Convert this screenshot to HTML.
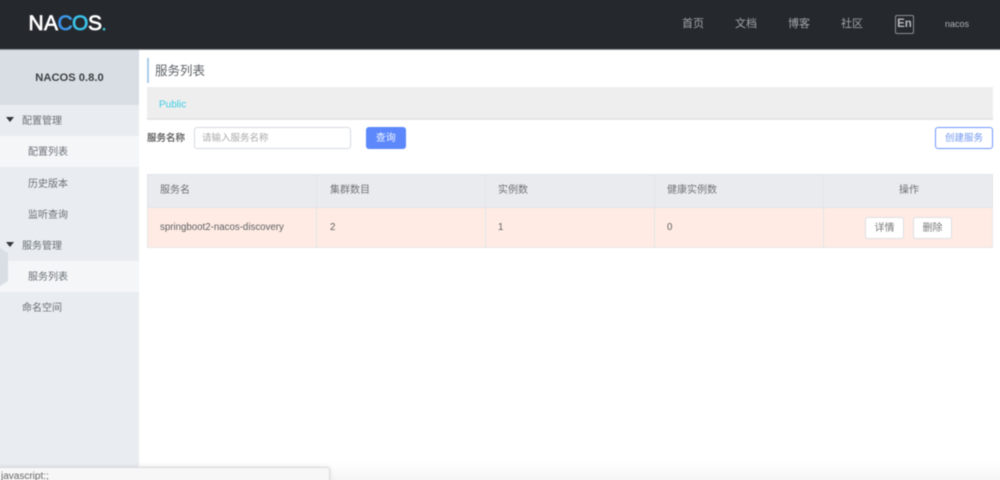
<!DOCTYPE html>
<html lang="zh">
<head>
<meta charset="utf-8">
<title>Nacos</title>
<style>
html,body{margin:0;padding:0;width:1000px;height:480px;overflow:hidden;background:#fff}
body{position:relative;font-family:"Liberation Sans","Noto Sans CJK SC",sans-serif;color:#666}
#p{position:absolute;left:0;top:0;width:1000px;height:480px;filter:blur(.5px)}
.a{position:absolute;white-space:nowrap}
.nav{top:16px;font-size:11px;line-height:16px;color:#a3a6a8}
.side{font-size:10px;line-height:14px;color:#6a7076}
.th{top:184px;font-size:10px;line-height:14px;color:#6f7276}
.td{top:221px;font-size:9.700px;line-height:14px;color:#5c6064}
.v{top:174px;height:74px;width:1px;background:#e1e4e9}
.btn{box-sizing:border-box;background:#fff;border:1px solid #dcdfe4;border-radius:3px;text-align:center;font-size:10px;color:#777}
</style>
</head>
<body>
<div id="p">
  <!-- header -->
  <div class="a" style="left:-10px;top:-10px;width:1020px;height:60px;background:#25292e;border-bottom:1px solid #8b8f92;box-sizing:border-box"></div>
  <svg class="a" style="left:24px;top:8px" width="90" height="30" viewBox="0 0 90 30">
    <defs>
      <linearGradient id="g" x1="0" x2="1" y1="0" y2="0"><stop offset="0" stop-color="#3d86e8"/><stop offset="1" stop-color="#3fa8e8"/></linearGradient>
    </defs>
    <g font-family="Liberation Sans" font-size="21" fill="#fff" stroke="#fff" stroke-width=".7">
      <text x="4.500" y="22">N</text>
      <text x="20" y="22">A</text>
      <text x="33.500" y="22" fill="url(#g)" stroke="#3d97e8">C</text>
      <text x="48" y="22" fill="#3cc0e8" stroke="#3cc0e8">O</text>
      <text x="64" y="22">S</text>
      <text x="78" y="22" font-size="15" fill="#3fd0e6" stroke="#3fd0e6">.</text>
    </g>
  </svg>
  <div class="a nav" style="left:682px">首页</div>
  <div class="a nav" style="left:735px">文档</div>
  <div class="a nav" style="left:788px">博客</div>
  <div class="a nav" style="left:841px">社区</div>
  <div class="a" style="left:895px;top:15px;width:19px;height:19px;box-sizing:border-box;border:1px solid #8a8d90;border-radius:2px;color:#b8babc;font-size:11.500px;font-weight:bold;line-height:17px;text-align:center">En</div>
  <div class="a" style="left:945px;top:18px;font-size:9px;line-height:13px;color:#b0b2b4">nacos</div>

  <!-- sidebar -->
  <div class="a" style="left:-10px;top:50px;width:149px;height:440px;background:#e9edf1"></div>
  <div class="a" style="left:-10px;top:50px;width:149px;height:55px;background:#d9dee4"></div>
  <div class="a" style="left:0;top:50px;width:139px;height:55px;text-align:center;font-size:11.200px;font-weight:bold;line-height:57px;color:#3c4043">NACOS 0.8.0</div>
  <div class="a" style="left:-10px;top:136px;width:149px;height:31px;background:#f4f6f8"></div>
  <div class="a" style="left:-10px;top:261px;width:149px;height:31px;background:#f4f6f8"></div>
  <svg class="a" style="left:-5px;top:248px" width="14" height="38"><path d="M0 0H5L13 5V33L5 38H0Z" fill="#d9dee4"/></svg>
  <svg class="a" style="left:6px;top:117px" width="9" height="6"><path d="M0 0H8L4 5Z" fill="#33373b"/></svg>
  <svg class="a" style="left:6px;top:242px" width="9" height="6"><path d="M0 0H8L4 5Z" fill="#33373b"/></svg>
  <div class="a side" style="left:22px;top:115px">配置管理</div>
  <div class="a side" style="left:28px;top:146px">配置列表</div>
  <div class="a side" style="left:28px;top:178px">历史版本</div>
  <div class="a side" style="left:28px;top:209px">监听查询</div>
  <div class="a side" style="left:22px;top:240px">服务管理</div>
  <div class="a side" style="left:28px;top:271px">服务列表</div>
  <div class="a side" style="left:22px;top:302px">命名空间</div>

  <!-- title -->
  <div class="a" style="left:147px;top:58px;width:2px;height:25px;background:#a9cbe8"></div>
  <div class="a" style="left:155px;top:62px;font-size:12.500px;line-height:18px;color:#5f6368">服务列表</div>
  <div class="a" style="left:147px;top:87px;width:846px;height:33px;box-sizing:border-box;background:#eee;border-bottom:2px solid #e4e4e4"></div>
  <div class="a" style="left:159px;top:97px;font-size:10px;line-height:15px;color:#3fcde6;transform:translateY(.6px)">Public</div>

  <!-- search -->
  <div class="a" style="left:147px;top:132px;font-size:9.500px;font-weight:bold;line-height:14px;color:#666">服务名称</div>
  <div class="a" style="left:194px;top:127px;width:157px;height:22px;box-sizing:border-box;border:1px solid #d6d9e0;border-radius:3px;background:#fff;padding-left:7px;font-size:9.500px;line-height:22px;color:#a9a9a9">请输入服务名称</div>
  <div class="a" style="left:366px;top:127px;width:39.500px;height:22px;border-radius:3px;background:#5c88fb;color:#eef3ff;font-size:10px;line-height:24px;text-align:center">查询</div>
  <div class="a" style="left:935px;top:127px;width:58px;height:22px;box-sizing:border-box;border:1px solid #6f96fb;border-radius:3px;background:#fff;color:#7097f0;font-size:9.500px;line-height:22px;text-align:center">创建服务</div>

  <!-- table -->
  <div class="a" style="left:147px;top:174px;width:846px;height:33px;box-sizing:border-box;background:#e9ebef;border:1px solid #e1e4e9;border-bottom:0"></div>
  <div class="a" style="left:147px;top:207px;width:846px;height:41px;box-sizing:border-box;background:#ffebe3;border:1px solid #e9e6e6;border-top:1px solid #e4e4e6"></div>
  <div class="a v" style="left:316px"></div>
  <div class="a v" style="left:485px"></div>
  <div class="a v" style="left:654px"></div>
  <div class="a v" style="left:823px"></div>
  <div class="a th" style="left:160px">服务名</div>
  <div class="a th" style="left:330px">集群数目</div>
  <div class="a th" style="left:498px">实例数</div>
  <div class="a th" style="left:667px">健康实例数</div>
  <div class="a th" style="left:899px">操作</div>
  <div class="a td" style="left:160px">springboot2-nacos-discovery</div>
  <div class="a td" style="left:330px">2</div>
  <div class="a td" style="left:498px">1</div>
  <div class="a td" style="left:667px">0</div>
  <div class="a btn" style="left:865px;top:217px;width:39px;height:22px;line-height:21px">详情</div>
  <div class="a btn" style="left:913px;top:217px;width:39px;height:22px;line-height:21px">删除</div>

  <!-- bottom shadow and status bubble -->
  <div class="a" style="left:139px;top:462px;width:871px;height:28px;background:linear-gradient(#fff,#f5f5f5 64%)"></div>
  <div class="a" style="left:-10px;top:467px;width:340px;height:23px;box-sizing:border-box;background:#f7f7f7;border:1px solid #dcdcdc;border-radius:3px;box-shadow:0 0 4px rgba(0,0,0,.12)"></div>
  <div class="a" style="left:1px;top:470px;font-size:10px;line-height:13px;color:#666">javascript:;</div>
</div>
</body>
</html>
